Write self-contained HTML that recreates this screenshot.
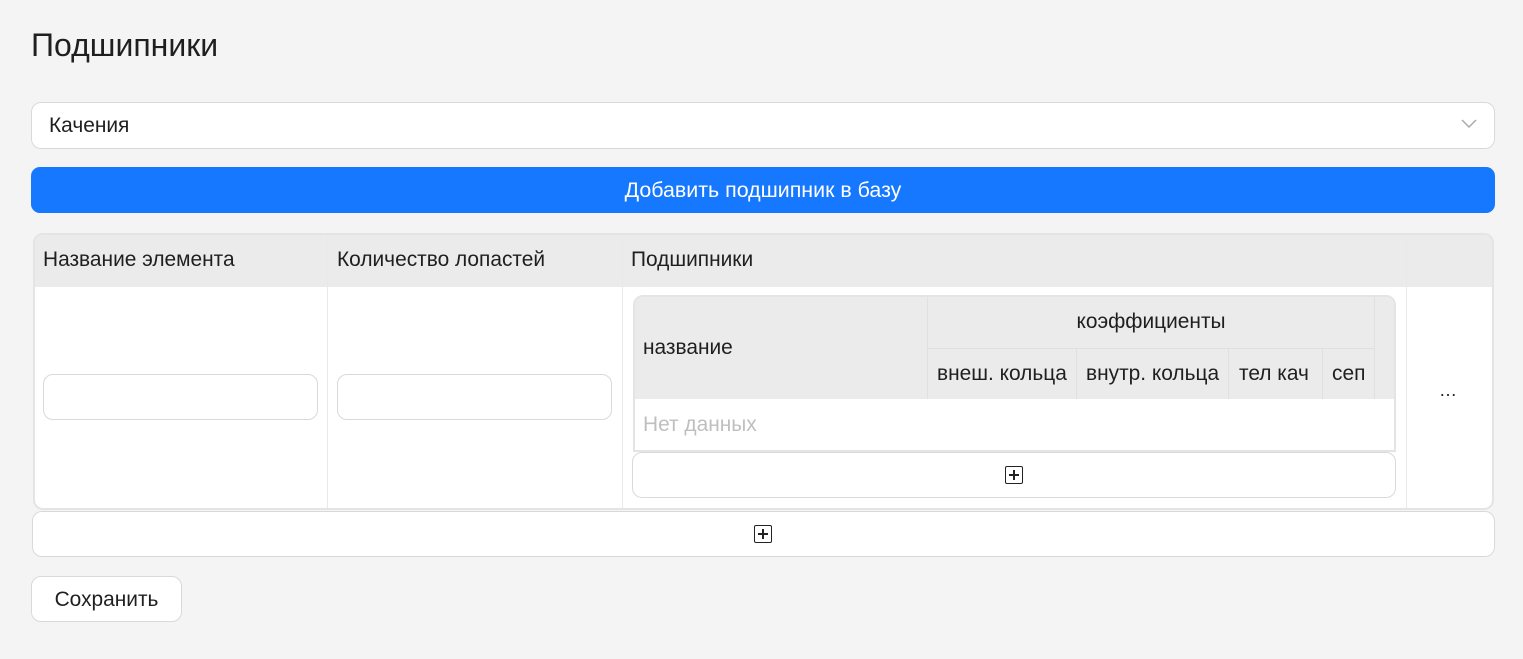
<html><head><style>
body{margin:0;background:#f4f4f4;font-family:"Liberation Sans",sans-serif;color:#1f1f1f;}
.a{position:absolute;box-sizing:border-box;}
.t{font-size:20.9px;}
.plus{position:absolute;width:18px;height:18px;border:1.5px solid #222;border-radius:2px;box-sizing:border-box;}
.plus:before{content:"";position:absolute;left:3px;right:3px;top:7px;height:1.5px;background:#222}
.plus:after{content:"";position:absolute;top:3px;bottom:3px;left:7px;width:1.5px;background:#222}
</style></head><body>
<div class="a" style="left:31px;top:27px;font-size:32px">Подшипники</div>
<div class="a" style="left:31px;top:102px;width:1464px;height:47px;background:#fff;border:1px solid #d9d9d9;border-radius:10px"></div>
<div class="a t" style="left:49px;top:114px">Качения</div>
<svg class="a" style="left:1461px;top:118px" width="16" height="12"><path d="M1 2 L8 9 L15 2" fill="none" stroke="#aaa" stroke-width="1.5"/></svg>
<div class="a" style="left:31px;top:167px;width:1464px;height:46px;background:#1677ff;border-radius:9px;color:#fff;text-align:center;line-height:46px;font-size:21.4px">Добавить подшипник в базу</div>

<div class="a" style="left:33px;top:233px;width:1461px;height:277px;background:#fff;border:2px solid #e4e4e4;border-radius:10px;overflow:hidden">
<div class="a" style="left:0;top:0;width:100%;height:52px;background:#ebebeb"></div>
<div class="a" style="left:292px;top:0;width:1px;height:100%;background:#e9e9e9"></div>
<div class="a" style="left:587px;top:0;width:1px;height:100%;background:#e9e9e9"></div>
<div class="a" style="left:1371px;top:0;width:1px;height:100%;background:#e9e9e9"></div>
</div>
<div class="a t" style="left:43px;top:248px">Название элемента</div>
<div class="a t" style="left:337px;top:248px">Количество лопастей</div>
<div class="a t" style="left:631px;top:248px">Подшипники</div>
<div class="a" style="left:43px;top:374px;width:275px;height:46px;border:1px solid #d9d9d9;border-radius:10px;background:#fff"></div>
<div class="a" style="left:337px;top:374px;width:275px;height:46px;border:1px solid #d9d9d9;border-radius:10px;background:#fff"></div>

<div class="a" style="left:633px;top:295px;width:763px;height:157px;border:2px solid #e4e4e4;border-radius:10px 10px 0 0;background:#fff;overflow:hidden">
<div class="a" style="left:0;top:0;width:100%;height:102px;background:#ebebeb"></div>
<div class="a" style="left:292px;top:0;width:1px;height:102px;background:#e0e0e0"></div>
<div class="a" style="left:292px;top:51px;width:447px;height:1px;background:#e0e0e0"></div>
<div class="a" style="left:441px;top:51px;width:1px;height:51px;background:#e0e0e0"></div>
<div class="a" style="left:593px;top:51px;width:1px;height:51px;background:#e0e0e0"></div>
<div class="a" style="left:687px;top:51px;width:1px;height:51px;background:#e0e0e0"></div>
<div class="a" style="left:739px;top:0;width:1px;height:102px;background:#e0e0e0"></div>
</div>
<div class="a t" style="left:643px;top:336px">название</div>
<div class="a t" style="left:927px;top:310px;width:448px;text-align:center">коэффициенты</div>
<div class="a t" style="left:937px;top:362px">внеш. кольца</div>
<div class="a t" style="left:1086px;top:362px">внутр. кольца</div>
<div class="a t" style="left:1239px;top:362px">тел кач</div>
<div class="a t" style="left:1332px;top:362px">сеп</div>
<div class="a t" style="left:643px;top:413px;color:#bfbfbf">Нет данных</div>
<div class="a" style="left:632px;top:452px;width:764px;height:46px;border:1px solid #d9d9d9;border-radius:10px;background:#fff"></div>
<div class="plus" style="left:1005px;top:466px"></div>
<div class="a" style="left:1439px;top:380px;font-size:18px">…</div>

<div class="a" style="left:32px;top:511px;width:1463px;height:46px;border:1px solid #d9d9d9;border-radius:10px;background:#fff"></div>
<div class="plus" style="left:754px;top:525px"></div>
<div class="a t" style="left:31px;top:576px;width:151px;height:46px;border:1px solid #d9d9d9;border-radius:10px;background:#fff;text-align:center;line-height:46px">Сохранить</div>
</body></html>
